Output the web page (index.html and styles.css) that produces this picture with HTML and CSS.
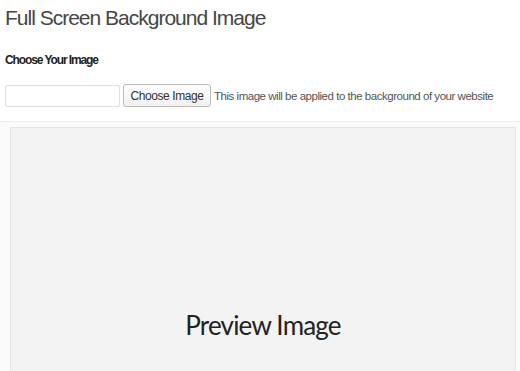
FILE: index.html
```html
<!DOCTYPE html>
<html lang="en">
<head>
    <meta charset="UTF-8">
    <meta name="viewport" content="width=device-width, initial-scale=1.0">
    <title>Full Screen Background Image</title>
    <link rel="stylesheet" href="styles.css">
</head>
<body>
    <h1 class="page-title">Full Screen Background Image</h1>
    <h2 class="section-title">Choose Your Image</h2>
    <div class="upload-row">
        <input type="text" class="image-url">
        <button class="choose-btn">Choose Image</button>
        <span class="hint">This image will be applied to the background of your website</span>
    </div>
    <div class="preview-wrap">
        <div class="preview">
            <div class="preview-label">Preview Image</div>
        </div>
    </div>
</body>
</html>
```

FILE: styles.css
```css
body {
    margin: 0;
    padding: 0 0 0 5px;
    background-color: #fff;
    font-family: "Liberation Sans", Arial, sans-serif;
    color: #444;
    overflow: hidden;
}
.page-title {
    margin: 0;
    padding-top: 5px;
    font-size: 21px;
    font-weight: normal;
    line-height: 26px;
    letter-spacing: -1px;
    color: #464646;
}
.section-title {
    margin: 21px 0 0;
    font-size: 12px;
    line-height: 16px;
    letter-spacing: -1.1px;
    color: #222;
}
.upload-row {
    display: flex;
    align-items: center;
    margin-top: 16px;
    height: 23px;
    white-space: nowrap;
}
.image-url {
    width: 115px;
    height: 22px;
    box-sizing: border-box;
    margin: 0;
    padding: 2px;
    border: 1px solid #dfdfdf;
    border-radius: 2px;
    background-color: #fff;
}
.choose-btn {
    margin: 0 0 0 3px;
    width: 88px;
    height: 23px;
    padding: 0;
    border: 1px solid #bbb;
    border-radius: 3px;
    background: linear-gradient(#fefefe, #f1f1f1);
    font-family: "Liberation Sans", Arial, sans-serif;
    font-size: 12px;
    letter-spacing: -0.4px;
    color: #333;
}
.hint {
    margin-left: 3px;
    font-size: 11.5px;
    letter-spacing: -0.47px;
    color: #555;
}
.preview-wrap {
    margin: 14px 0 0 -5px;
    padding: 5px 4px 0 8px;
    border-top: 1px solid #ececec;
    background-color: #fbfbfb;
}
.preview {
    display: flex;
    justify-content: center;
    height: 260px;
    margin-left: 2px;
    border: 1px solid #e4e4e4;
    background-color: #f3f3f3;
}
.preview-label {
    margin-top: 181px;
    font-family: Lato, "Open Sans", sans-serif;
    font-size: 26px;
    line-height: 32px;
    letter-spacing: -0.8px;
    color: #222;
}
```
